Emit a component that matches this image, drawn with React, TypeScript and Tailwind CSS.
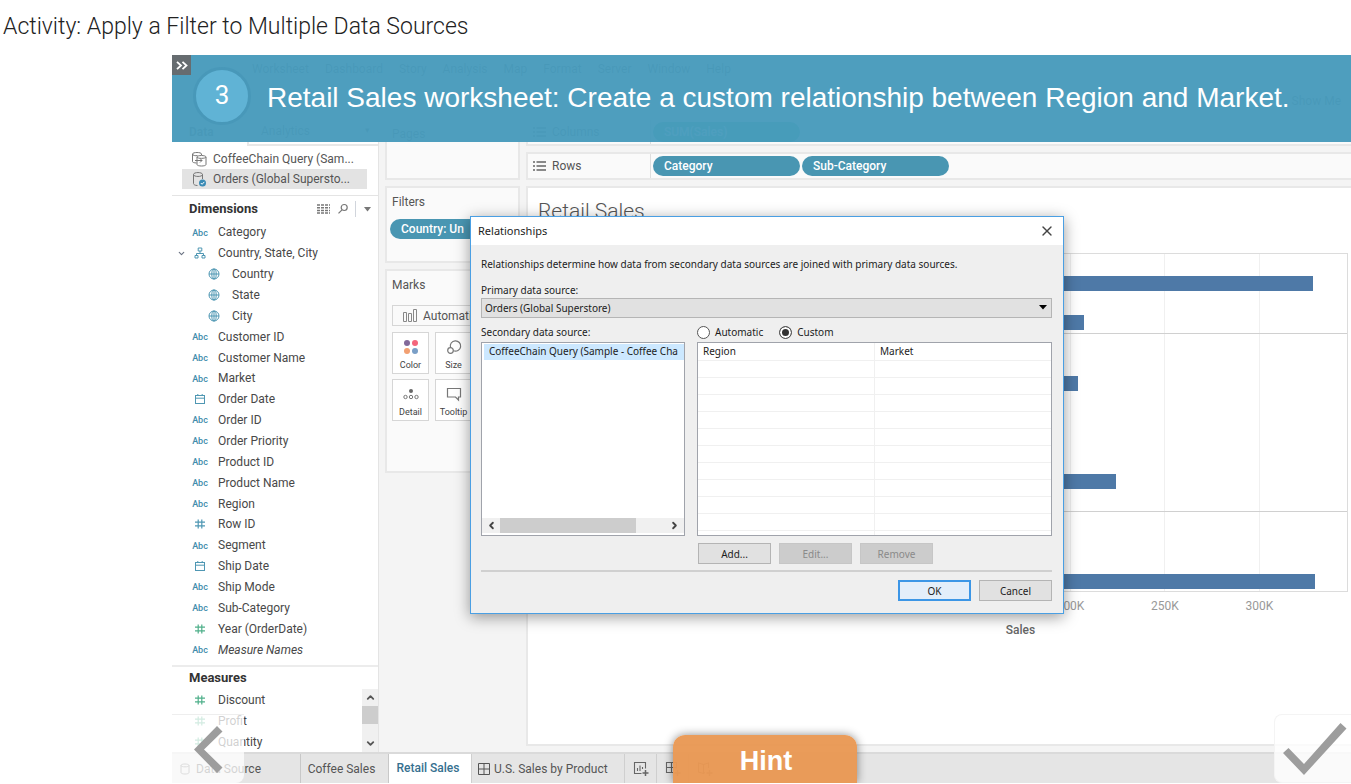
import { ReactNode } from 'react';
import { ChevronDown, ChevronUp, ChevronLeft, ChevronRight, X } from 'lucide-react';
import clsx from 'clsx';

type FieldKind = 'text' | 'geo' | 'date' | 'number' | 'measure' | 'hierarchy';

interface Field {
  name: string;
  kind: FieldKind;
  nested?: boolean;
  italic?: boolean;
}

const dimensions: Field[] = [
  { name: 'Category', kind: 'text' },
  { name: 'Country, State, City', kind: 'hierarchy' },
  { name: 'Country', kind: 'geo', nested: true },
  { name: 'State', kind: 'geo', nested: true },
  { name: 'City', kind: 'geo', nested: true },
  { name: 'Customer ID', kind: 'text' },
  { name: 'Customer Name', kind: 'text' },
  { name: 'Market', kind: 'text' },
  { name: 'Order Date', kind: 'date' },
  { name: 'Order ID', kind: 'text' },
  { name: 'Order Priority', kind: 'text' },
  { name: 'Product ID', kind: 'text' },
  { name: 'Product Name', kind: 'text' },
  { name: 'Region', kind: 'text' },
  { name: 'Row ID', kind: 'number' },
  { name: 'Segment', kind: 'text' },
  { name: 'Ship Date', kind: 'date' },
  { name: 'Ship Mode', kind: 'text' },
  { name: 'Sub-Category', kind: 'text' },
  { name: 'Year (OrderDate)', kind: 'measure' },
  { name: 'Measure Names', kind: 'text', italic: true },
];

const measures: Field[] = [
  { name: 'Discount', kind: 'measure' },
  { name: 'Profit', kind: 'measure' },
  { name: 'Quantity', kind: 'measure' },
];

// Sales per sub-category in thousands, grouped by category
const salesGroups = [
  [115, 329, 92, 207],
  [107, 27, 204, 16, 3, 12, 78, 224, 47],
  [167, 150, 189, 330],
];
const axisMax = 347;
const ticks = [200, 250, 300];

const menuItems = ['Worksheet', 'Dashboard', 'Story', 'Analysis', 'Map', 'Format', 'Server', 'Window', 'Help'];

function FieldIcon({ kind }: { kind: FieldKind }) {
  if (kind === 'text') {
    return <span className="pt-0.5 text-[9px] font-medium text-[#3f8dac]">Abc</span>;
  }
  if (kind === 'geo') {
    return (
      <svg width="12" height="12" viewBox="0 0 12 12" fill="none" stroke="#4f97b3" strokeWidth="1">
        <circle cx="6" cy="6" r="5" />
        <ellipse cx="6" cy="6" rx="2.2" ry="5" />
        <path d="M1 6h10M6 1v10" />
      </svg>
    );
  }
  if (kind === 'date') {
    return (
      <svg width="12" height="12" viewBox="0 0 12 12" fill="none" stroke="#4f97b3" strokeWidth="1">
        <rect x="1.5" y="2.5" width="9" height="8" />
        <path d="M1.5 5.2h9M3.8 1v2M8.2 1v2" />
      </svg>
    );
  }
  if (kind === 'hierarchy') {
    return (
      <svg width="12" height="12" viewBox="0 0 12 12" fill="none" stroke="#4f97b3" strokeWidth="1">
        <path d="M4.2 1h3.6v3H4.2zM6 4v2.5M2.5 8.5v-2h7v2M1 8.5h3v2.5H1zM8 8.5h3v2.5H8z" />
      </svg>
    );
  }
  return (
    <svg
      width="12"
      height="12"
      viewBox="0 0 12 12"
      fill="none"
      stroke={kind === 'measure' ? '#4fb08a' : '#4f97b3'}
      strokeWidth="1.2"
    >
      <path d="M4.2 1.5v9M7.8 1.5v9M1 4.2h10M1 7.8h10" />
    </svg>
  );
}

function FieldRow({ field }: { field: Field }) {
  return (
    <li className={clsx('flex flex-1 items-center text-[12px] text-[#484848]', field.nested && 'pl-3.5')}>
      <span className="flex w-5 justify-end pr-1.5">
        {field.kind === 'hierarchy' && <ChevronDown size={9} strokeWidth={3} className="text-gray-500" />}
      </span>
      <span className="mr-2.5 flex w-4 justify-center">
        <FieldIcon kind={field.kind} />
      </span>
      <span className={clsx('whitespace-nowrap', field.italic && 'italic')}>{field.name}</span>
    </li>
  );
}

function DatabaseIcon({ primary }: { primary?: boolean }) {
  return (
    <svg width="15" height="16" viewBox="0 0 15 16" fill="none" stroke="#777" strokeWidth="1">
      {primary ? (
        <>
          <path d="M1.5 3.5v9c0 1 1.5 2 4 2M10.5 3.5V8M1.5 3.5c0 2.6 9 2.6 9 0s-9-2.6-9 0z" />
          <circle cx="10.5" cy="12" r="3.5" fill="#3a8bb5" stroke="none" />
          <path d="M8.8 12l1.3 1.3 2.2-2.4" stroke="#fff" />
        </>
      ) : (
        <>
          <path d="M4.5 12C2 11.800.5 11.500.5 10.500V3c0-2 9-2 9 0v1M.5 3c0 1.500 3 2 5 1.500" />
          <path d="M5 6v7.500c0 2 9 2 9 0V6c0-2-9-2-9 0zM5 6c0 1.800 9 1.800 9 0" />
          <path d="M3 9.500h7M8 7.500l2 2-2 2" />
        </>
      )}
    </svg>
  );
}

function DataPane() {
  return (
    <aside className="flex w-[207px] shrink-0 flex-col border-r border-[#e4e4e4] bg-white">
      <div className="flex h-7 text-[12px] text-[#555]">
        <span className="flex w-[75px] items-center pl-[17px] font-bold">Data</span>
        <span className="flex flex-1 items-center justify-between border-b-2 border-l-2 border-[#e8e8e8] pr-2 pl-3">
          Analytics <span className="text-[9px]">▾</span>
        </span>
      </div>
      <ul className="mt-[3px] mr-[11px] mb-1.5 ml-2.5 text-[12px] text-[#555]">
        <li className="flex h-5 items-center gap-1.5 pl-2.5">
          <DatabaseIcon />
          <span className="whitespace-nowrap">CoffeeChain Query (Sam...</span>
        </li>
        <li className="flex h-5 items-center gap-1.5 bg-[#e3e3e3] pl-2.5">
          <DatabaseIcon primary />
          <span className="whitespace-nowrap">Orders (Global Supersto...</span>
        </li>
      </ul>

      <div className="flex h-[27px] items-center border-t border-[#e4e4e4] pl-[17px]">
        <h2 className="flex-1 text-[13px] font-bold text-[#333]">Dimensions</h2>
        <svg width="14" height="10" viewBox="0 0 14 10" stroke="#777" strokeWidth="1.5" strokeDasharray="3 1">
          <path d="M0 1h13M0 3.700h13M0 6.400h13M0 9h13" />
        </svg>
        <svg width="12" height="12" viewBox="0 0 12 12" fill="none" stroke="#777" strokeWidth="1.2" className="ml-1.5">
          <circle cx="7.2" cy="4.5" r="3" />
          <path d="M5 6.800L1.500 10.300" />
        </svg>
        <span className="ml-1.5 h-4 border-l border-gray-300" />
        <svg width="7" height="5" viewBox="0 0 7 5" fill="#777" className="mr-[7px] ml-2">
          <path d="M0 0h7L3.500 4.500z" />
        </svg>
      </div>
      <ul className="flex h-[438px] flex-col">
        {dimensions.map((field) => (
          <FieldRow key={field.name} field={field} />
        ))}
      </ul>

      <h2 className="mt-[5px] flex h-6 items-center border-t-2 border-[#ececec] pl-[17px] text-[13px] font-bold text-[#333]">
        Measures
      </h2>
      <div className="flex h-[63px]">
        <ul className="flex flex-1 flex-col">
          {measures.map((field) => (
            <FieldRow key={field.name} field={field} />
          ))}
        </ul>
        <div className="flex w-4 flex-col items-center bg-[#f0f0f0] text-[#555]">
          <ChevronUp size={11} strokeWidth={4} className="my-[3px]" />
          <span className="h-[18px] w-full bg-[#cdcdcd]" />
          <ChevronDown size={11} strokeWidth={4} className="mt-auto mb-[3px]" />
        </div>
      </div>
    </aside>
  );
}

function Pill({ children, className }: { children: ReactNode; className?: string }) {
  return (
    <span
      className={clsx(
        'flex h-5 items-center rounded-full pl-[11px] text-[12px] font-medium whitespace-nowrap text-white',
        className ?? 'w-[147px] bg-[#4996b2]'
      )}
    >
      {children}
    </span>
  );
}

function MarkButton({ label, children }: { label: string; children: ReactNode }) {
  return (
    <button className="flex h-[42px] w-[37px] shrink-0 flex-col items-center justify-between border border-[#d6d6d6] bg-white pt-1.5 pb-px text-[9px] text-[#444]">
      {children}
      {label}
    </button>
  );
}

function Cards() {
  return (
    <div className="mx-1.5 flex w-[135px] shrink-0 flex-col gap-1.5 text-[12px] text-[#555]">
      <section className="h-[62px] border-2 border-[#e8e8e8] bg-[#fafafa] px-[5px] pt-[5px]">Pages</section>
      <section className="h-[77px] overflow-hidden border-2 border-[#e8e8e8] bg-[#fafafa] px-[3px] pt-[5px]">
        <h3 className="mb-2 px-0.5">Filters</h3>
        <Pill className="w-[124px] bg-[#4996b2]">Country: Un</Pill>
      </section>
      <section className="h-[204px] overflow-hidden border-2 border-[#e8e8e8] bg-[#fafafa] px-[5px] pt-[5px]">
        <h3 className="mb-[11px]">Marks</h3>
        <button className="flex h-[21px] w-full items-center gap-1.5 border border-[#d6d6d6] pl-2.5">
          <svg width="14" height="13" viewBox="0 0 14 13" fill="none" stroke="#888">
            <path d="M.5 3.500h3v9h-3zM5.500 4.500h3v8h-3zM10.500.5h3v12h-3z" />
          </svg>
          Automatic
        </button>
        <div className="mt-1.5 flex flex-wrap gap-x-1.5 gap-y-[5px]">
          <MarkButton label="Color">
            <svg width="16" height="16" viewBox="0 0 16 16">
              <circle cx="4" cy="4" r="3" fill="#82699a" />
              <circle cx="12" cy="4" r="3" fill="#f4667c" />
              <circle cx="4" cy="12" r="3" fill="#f2a072" />
              <circle cx="12" cy="12" r="3" fill="#7a9fc7" />
            </svg>
          </MarkButton>
          <MarkButton label="Size">
            <svg width="16" height="16" viewBox="0 0 16 16" fill="none" stroke="#777" strokeWidth="1.2">
              <path d="M4.500 8.500A5.200 5.200 0 1 1 7.500 11.800" />
              <circle cx="4.5" cy="11.5" r="2.8" />
            </svg>
          </MarkButton>
          <MarkButton label="Detail">
            <svg width="16" height="16" viewBox="0 0 16 16" fill="none" stroke="#777">
              <circle cx="8" cy="5" r="2" fill="#666" stroke="none" />
              <circle cx="2.5" cy="11" r="1.7" />
              <circle cx="8" cy="11" r="1.7" />
              <circle cx="13.5" cy="11" r="1.7" />
            </svg>
          </MarkButton>
          <MarkButton label="Tooltip">
            <svg width="16" height="16" viewBox="0 0 16 16" fill="none" stroke="#777" strokeWidth="1.2">
              <path d="M1.500 2.500h13v8.500h-2v3l-3-3h-8z" />
            </svg>
          </MarkButton>
        </div>
      </section>
    </div>
  );
}

function Shelf({ label, children }: { label: string; children: ReactNode }) {
  return (
    <div className="flex h-7 items-center border-2 border-r-0 border-[#e8e8e8] bg-[#fafafa] text-[12px] text-[#555]">
      <span className="flex h-full w-[123px] items-center gap-1.5 border-r border-[#dedede] pl-[5px]">
        <svg width="13" height="12" viewBox="0 0 13 12" stroke="#666" strokeWidth="1.5">
          <path d="M0 2h2M3.500 2H13M0 6h2M3.500 6H13M0 10h2M3.500 10H13" />
        </svg>
        {label}
      </span>
      <span className="ml-0.5 flex gap-0.5">{children}</span>
    </div>
  );
}

function SalesChart() {
  return (
    <div className="mr-[3px] ml-[165px]">
      <div className="relative flex h-[339px] flex-col border border-[#dcdcdc]">
        {ticks.map((tick) => (
          <span
            key={tick}
            className="absolute inset-y-0 border-l border-[#f0f0f0]"
            style={{ left: `${(tick / axisMax) * 100}%` }}
          />
        ))}
        {salesGroups.map((group, i) => (
          <div
            key={i}
            className={clsx('relative flex flex-col border-[#d0d0d0]', i > 0 && 'border-t')}
            style={{ flex: group.length }}
          >
            {group.map((value, row) => (
              <div key={row} className="flex flex-1 items-center">
                <span className="h-[15px] bg-[#4e79a7]" style={{ width: `${(value / axisMax) * 100}%` }} />
              </div>
            ))}
          </div>
        ))}
      </div>
      <div className="relative mt-[5px] h-5 text-[12px] text-[#999]">
        {ticks.map((tick) => (
          <span key={tick} className="absolute -translate-x-1/2" style={{ left: `${(tick / axisMax) * 100}%` }}>
            {tick}K
          </span>
        ))}
      </div>
      <p className="mt-1 text-center text-[12px] font-medium text-[#666]">Sales</p>
    </div>
  );
}

function NewTabIcon({ d }: { d: string }) {
  return (
    <svg width="16" height="16" viewBox="0 0 16 16" fill="none" stroke="#666" strokeWidth="1.1">
      <path d={d} />
      <path d="M12.500 9v6M9.500 12h6" strokeWidth="1.5" />
    </svg>
  );
}

function SheetTabs() {
  return (
    <nav className="flex h-[31px] items-stretch border-t-2 border-[#dadada] bg-[#e5e5e5] text-[12px] text-[#555]">
      <button className="flex w-[129px] shrink-0 items-center gap-1.5 border-r border-[#c8c8c8] pl-2">
        <svg width="10" height="12" viewBox="0 0 10 12" fill="none" stroke="#777">
          <path d="M1 2.500v7c0 2 8 2 8 0v-7c0-2-8-2-8 0zM1 2.500c0 1.800 8 1.800 8 0" />
        </svg>
        Data Source
      </button>
      <button className="w-[88px] shrink-0 border-r border-[#c8c8c8] pr-1.5">Coffee Sales</button>
      <button className="w-[82px] shrink-0 bg-white pr-1 pb-0.5 font-medium text-[#36708f]">Retail Sales</button>
      <button className="flex w-[154px] shrink-0 items-center gap-1 border-r border-l border-[#cfcfcf] pl-1.5">
        <svg width="12" height="12" viewBox="0 0 12 12" fill="none" stroke="#555">
          <path d="M.5.5h11v11H.5zM6 .5v11M.5 6h11" />
        </svg>
        <span className="whitespace-nowrap">U.S. Sales by Product</span>
      </button>
      <button aria-label="New worksheet" className="flex w-8 shrink-0 items-center justify-center border-r border-[#cfcfcf]">
        <NewTabIcon d="M8.500 12.500h-7v-11h11v6M4.500 7v3M7 4.500V10M9.500 6v2" />
      </button>
      <button aria-label="New dashboard" className="flex w-8 shrink-0 items-center justify-center border-r border-[#cfcfcf]">
        <NewTabIcon d="M8.500 11.500h-7v-10h10v6M6.500 1.500v10M1.500 6.500h10" />
      </button>
      <button aria-label="New story" className="flex w-8 shrink-0 items-center justify-center">
        <NewTabIcon d="M8 11.500L6.500 12.500l-5-1.500V2l5 1.500 5-1.500v5M6.500 3.500v9" />
      </button>
    </nav>
  );
}

function DialogButton({ children, className, disabled }: { children: ReactNode; className?: string; disabled?: boolean }) {
  return (
    <button
      disabled={disabled}
      className={clsx(
        'h-[21px] w-[73px] text-[10px]',
        disabled
          ? 'border border-[#c6c6c6] bg-[#cccccc] text-[#8a8a8a]'
          : className ?? 'border border-[#b4b4b4] bg-[#e1e1e1]'
      )}
    >
      {children}
    </button>
  );
}

function RelationshipsDialog() {
  return (
    <div
      role="dialog"
      aria-labelledby="dialog-title"
      className="absolute top-[161px] left-[298px] w-[594px] border border-[#4a9fe3] bg-[#efefef] pb-3 font-['Noto_Sans',sans-serif] text-[10px] leading-[14px] text-[#1c1c1c] shadow-[0_3px_14px_rgba(0,0,0,0.4)]"
    >
      <div className="flex h-7 items-center justify-between bg-white pr-2 pl-[7px]">
        <h2 id="dialog-title" className="text-[11px]">Relationships</h2>
        <button aria-label="Close" className="text-[#444]">
          <X size={16} strokeWidth={2} />
        </button>
      </div>
      <div className="pt-3 pr-[11px] pl-2.5">
        <p>Relationships determine how data from secondary data sources are joined with primary data sources.</p>
        <label htmlFor="primary" className="mt-3 block">Primary data source:</label>
        <div className="relative mt-px">
          <select
            id="primary"
            className="h-5 w-full appearance-none rounded-none border border-[#b5b5b5] bg-[#e1e1e1] px-[3px]"
          >
            <option>Orders (Global Superstore)</option>
          </select>
          <svg width="8" height="5" viewBox="0 0 8 5" className="pointer-events-none absolute top-[7px] right-[5px]">
            <path d="M0 0h8L4 4.500z" />
          </svg>
        </div>

        <div className="mt-[7px] flex gap-3">
          <div className="w-[204px]">
            <p id="secondary-label">Secondary data source:</p>
            <div className="mt-[3px] flex h-[194px] flex-col border border-[#a0a3ab] bg-white">
              <ul role="listbox" aria-labelledby="secondary-label" className="flex-1 overflow-hidden pt-px pl-0.5">
                <li role="option" aria-selected className="h-4 overflow-hidden bg-[#cce8ff] pl-[5px] whitespace-nowrap">
                  CoffeeChain Query (Sample - Coffee Cha
                </li>
              </ul>
              <div className="mb-0.5 flex h-[15px] items-center bg-[#f0f0f0] px-1 text-[#444]">
                <ChevronLeft size={11} strokeWidth={4} />
                <span className="ml-[3px] h-full w-[136px] bg-[#cdcdcd]" />
                <ChevronRight size={11} strokeWidth={4} className="ml-auto" />
              </div>
            </div>
          </div>

          <div className="flex-1">
            <div className="flex h-3.5 gap-4">
              <label className="flex items-center gap-[5px]">
                <input
                  type="radio"
                  name="mode"
                  className="size-[13px] appearance-none rounded-full border border-[#555] bg-white checked:bg-[#333] checked:shadow-[inset_0_0_0_2px_#fff]"
                />
                Automatic
              </label>
              <label className="flex items-center gap-[5px]">
                <input
                  type="radio"
                  name="mode"
                  defaultChecked
                  className="size-[13px] appearance-none rounded-full border border-[#555] bg-white checked:bg-[#333] checked:shadow-[inset_0_0_0_2px_#fff]"
                />
                Custom
              </label>
            </div>
            <div className="mt-[3px] h-[194px] overflow-hidden border border-[#a0a3ab] bg-white">
              <table className="w-full table-fixed border-collapse">
                <tbody>
                  {Array.from({ length: 12 }, (_, i) => (
                    <tr key={i} className="h-[17px] border-b border-[#f0f0f0]">
                      <td className="border-r border-[#f0f0f0] pl-[5px]">{i === 0 && 'Region'}</td>
                      <td className="pl-[5px]">{i === 0 && 'Market'}</td>
                    </tr>
                  ))}
                </tbody>
              </table>
            </div>
            <div className="mt-[7px] flex gap-2 pl-px">
              <DialogButton>Add...</DialogButton>
              <DialogButton disabled>Edit...</DialogButton>
              <DialogButton disabled>Remove</DialogButton>
            </div>
          </div>
        </div>

        <div className="mt-1.5 flex justify-end gap-2 border-t-2 border-[#d0d0d0] pt-2">
          <DialogButton className="border-2 border-[#3c96e6] bg-[#e3eefa]">OK</DialogButton>
          <DialogButton>Cancel</DialogButton>
        </div>
      </div>
    </div>
  );
}

function StepBanner() {
  return (
    <div className="absolute inset-x-0 top-0 h-[87px] bg-[#489bbc]/97 font-['Liberation_Sans',sans-serif] text-white">
      <div className="flex h-full items-center gap-4 pb-1.5 pl-[21px]">
        <span className="flex size-[58px] shrink-0 items-center justify-center rounded-full border-3 border-[#4898b9] bg-[#60b3d5] font-['Roboto',sans-serif] text-[26px]">
          3
        </span>
        <h1 className="pt-1 text-[28px] whitespace-nowrap">
          Retail Sales worksheet: Create a custom relationship between Region and Market.
        </h1>
      </div>
      <button
        aria-label="Collapse steps"
        className="absolute top-0 left-0 flex h-5 w-[19px] items-center justify-center bg-[#666c70]"
      >
        <svg width="12" height="9" viewBox="0 0 12 9" fill="none" stroke="#fff" strokeWidth="1.8">
          <path d="M1 .8l4 3.700-4 3.700M6.500.8l4 3.700-4 3.700" />
        </svg>
      </button>
    </div>
  );
}

export default function App() {
  return (
    <div className="overflow-hidden bg-white font-['Roboto',sans-serif]">
      <header className="flex h-[55px] items-center pl-[3px] text-[23px] font-light text-[#222]">
        Activity: Apply a Filter to Multiple Data Sources
      </header>

      <main className="relative ml-[172px] bg-[#f4f4f4]">
        <div className="flex h-7 items-center gap-4 bg-white pl-20 text-[12px] text-[#555]">
          {menuItems.map((item) => (
            <span key={item}>{item}</span>
          ))}
        </div>
        <div className="flex h-[35px] items-center justify-end pr-2.5 text-[12px] text-[#555]">Show Me</div>

        <div className="flex">
          <DataPane />
          <Cards />
          <div className="flex min-w-0 flex-1 flex-col gap-1.5 pb-1.5">
            <Shelf label="Columns">
              <Pill className="w-[147px] bg-[#1fae8d]">SUM(Sales)</Pill>
            </Shelf>
            <Shelf label="Rows">
              <Pill>Category</Pill>
              <Pill>Sub-Category</Pill>
            </Shelf>
            <section className="flex-1 border-2 border-r-0 border-[#e8e8e8] bg-white">
              <h2 className="h-[65px] pt-2 pl-2.5 text-[21px] font-light text-[#555]">Retail Sales</h2>
              <SalesChart />
            </section>
          </div>
        </div>
        <SheetTabs />

        <RelationshipsDialog />
        <StepBanner />

        <button
          aria-label="Previous step"
          className="absolute bottom-0 left-0 h-[69px] w-[72px] rounded-br-lg border-t border-[#eee] bg-white/75"
        >
          <svg width="72" height="68" viewBox="0 0 72 68" fill="#9d9d9d">
            <path d="M45 11l5.500 5.500L32 34.500l18.500 18L45 58 22 34.500z" />
          </svg>
        </button>
        <button className="absolute bottom-0 left-[501px] h-12 w-[184px] rounded-t-xl bg-[#e99853]/96 pt-1 pl-0.5 font-['Liberation_Sans',sans-serif] text-[27px] font-bold text-white shadow-[0_0_10px_rgba(0,0,0,0.45)]">
          Hint
        </button>
        <button
          aria-label="Done"
          className="absolute right-0 bottom-0 h-[69px] w-[77px] rounded-l-lg border border-r-0 border-[#f4f4f4] bg-white/80"
        >
          <svg width="76" height="67" viewBox="0 0 76 67" fill="#9d9d9d">
            <path d="M8 38l5.500-5 15.500 16L65.500 8l6 5.500L29 60z" />
          </svg>
        </button>
      </main>
    </div>
  );
}
